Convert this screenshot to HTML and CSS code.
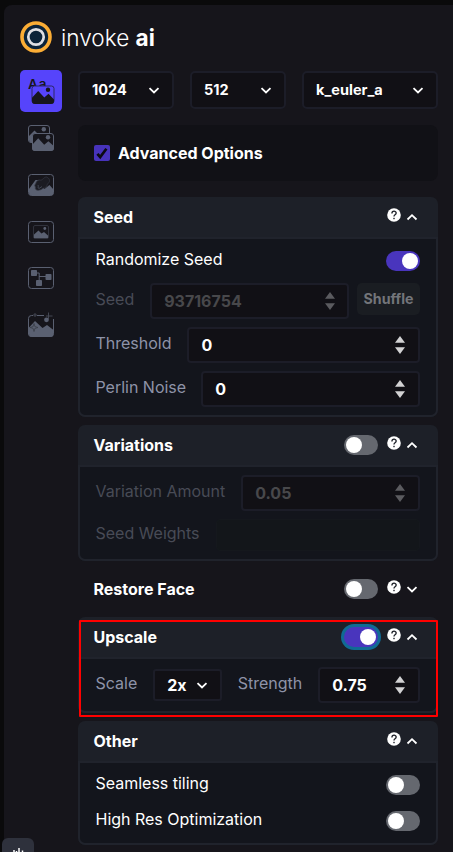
FILE: index.html
```html
<!DOCTYPE html>
<html lang="en">
<head>
<meta charset="utf-8">
<title>invoke ai</title>
<link rel="stylesheet" href="styles.css">
</head>
<body>
<svg width="0" height="0" class="defs">
  <defs>
    <symbol id="down" viewBox="0 0 12 12"><path d="M1.5 4.2 6 8.5l4.5-4.3" fill="none" stroke="currentColor" stroke-width="1.8"/></symbol>
    <symbol id="up" viewBox="0 0 12 12"><path d="M1.5 8.5 6 4.2l4.5 4.3" fill="none" stroke="currentColor" stroke-width="1.8"/></symbol>
    <symbol id="help" viewBox="0 0 14 14"><circle cx="7" cy="7" r="6.8" fill="#fff"/><path d="M4.9 5.5C4.9 2.4 9.2 2.6 9.2 5.1 9.2 6.8 7 6.8 7 8.4" fill="none" stroke="#1d2028" stroke-width="1.3"/><rect x="6.3" y="9.8" width="1.4" height="1.4" fill="#1d2028"/></symbol>
    <symbol id="spin" viewBox="0 0 10 18"><path d="M5 0 10 6.7H0zM0 11.2h10L5 18z" fill="currentColor"/></symbol>
  </defs>
</svg>
<div class="panel">
  <header class="brand">
    <svg width="32" height="32" viewBox="0 0 32 32"><circle cx="16" cy="16" r="14" fill="#0b2339" stroke="#fbad35" stroke-width="3.6"/><circle cx="16" cy="16" r="7.7" fill="none" stroke="#dedfe3" stroke-width="2.7"/></svg>
    <h1>invoke <b>ai</b></h1>
  </header>
  <div class="main">
    <nav class="rail">
      <button class="tab active"><svg width="42" height="42" viewBox="0 0 42 42"><text x="8" y="18.5" class="glyph">Aa</text><rect x="12" y="16" width="22" height="17.5" rx="2.5" fill="#5644fb" stroke="#2c2667"/><path d="M12 27.8l6.2-6.9 6.1 6.7 4.2-3.8 5.5 5.7V31q0 3-3 3H15q-3 0-3-3z" fill="#17161d"/><circle cx="28" cy="19.8" r="2.2" fill="#17161d"/></svg></button>
      <button class="tab"><svg width="42" height="42" viewBox="0 0 42 42"><rect x="8.5" y="8.5" width="21" height="17" rx="2.5" fill="none" stroke="#5a6071"/><path d="M9 19l5.5-5.5 4 4v8H12q-3 0-3-3z" fill="#5a6071"/><circle cx="23.8" cy="12.3" r="2.2" fill="#5a6071"/><rect x="12.5" y="16.5" width="21" height="17" rx="2.5" fill="#16151b" stroke="#5a6071"/><path d="M12 28l6.2-6.8 6 6.5 4.2-3.5 5.6 5V31q0 3-3 3H15q-3 0-3-3z" fill="#5a6071"/><circle cx="28" cy="20.2" r="2.2" fill="#5a6071"/></svg></button>
      <button class="tab"><svg width="42" height="42" viewBox="0 0 42 42"><rect x="8.5" y="10.5" width="25" height="21" rx="3" fill="none" stroke="#5a6071"/><path d="M9 25l6.5-9h4l5 9 5-4 4 4.5v3q0 3-3 3H12q-3 0-3-3z" fill="#5a6071"/><path d="M15.500 20c1-3 2-4 4-4 3 1 4-3 7-3 3 1 4 4 2 6-2 1-1 4-4 5-2 0-3 2-5 2-3 1-5-1-4-3-1-1-1-2 0-3z" fill="#1b1b22" stroke="#363a45" stroke-width=".7"/><path d="M18 21c1 1.500-1 3 1 3.500l3-2" fill="none" stroke="#474c5a" stroke-width=".8"/></svg></button>
      <button class="tab"><svg width="42" height="42" viewBox="0 0 42 42"><rect x="8.5" y="10.5" width="25" height="21" rx="3" fill="none" stroke="#5a6071"/><rect x="13.5" y="14.5" width="15" height="13" rx="1.5" fill="none" stroke="#30323c"/><path d="M14 23.5l4.5-4 3 3 2.5-1.5 4 3.5V27H14z" fill="#5a6071"/><circle cx="24.8" cy="17.5" r="1.4" fill="#5a6071"/></svg></button>
      <button class="tab"><svg width="42" height="42" viewBox="0 0 42 42"><rect x="8.5" y="9.5" width="25" height="21" rx="3" fill="none" stroke="#5a6071"/><path d="M14 15h5.2v9M19 18.5h8" fill="none" stroke="#5a6071"/><rect x="11" y="12" width="6" height="6" rx=".8" fill="#5a6071"/><rect x="25.5" y="16" width="6" height="6" rx=".8" fill="#5a6071"/><rect x="16" y="22" width="6" height="6" rx=".8" fill="#5a6071"/></svg></button>
      <button class="tab"><svg width="42" height="42" viewBox="0 0 42 42"><path d="M13 10.5h-1.5q-3 0-3 3V29q0 2.5 3 2.5h19q3 0 3-3V14M17 10.5h7" fill="none" stroke="#5a6071"/><path d="M9 22.5l6-6.5 7.5 7 4.5-3 6.5 5v4q0 3-3 3H12q-3 0-3-3z" fill="#5a6071"/><circle cx="26.5" cy="14.8" r="2.4" fill="#5a6071"/><path d="M14 18.500l.9 3.100 3.100.9-3.100.9-.9 3.100-.9-3.100-3.100-.9 3.100-.9z" fill="#5a6071" stroke="#3a3d48" stroke-width=".8"/><path d="M15 8v4M13 10h4M28.500 7.500v7M26 11h6.500" stroke="#484c59" stroke-width=".9"/></svg></button>
    </nav>
    <main class="options">
      <div class="selects">
        <div class="select">1024<svg width="12" height="12"><use href="#down"/></svg></div>
        <div class="select">512<svg width="12" height="12"><use href="#down"/></svg></div>
        <div class="select sampler">k_euler_a<svg width="12" height="12"><use href="#down"/></svg></div>
      </div>
      <label class="advanced"><span class="check"><svg width="16" height="16" viewBox="0 0 16 16"><path d="M3.4 8.8 6.2 12 12.4 3.8" fill="none" stroke="#0b0a12" stroke-width="2.7"/></svg></span>Advanced Options</label>

      <section class="card">
        <div class="head"><h2>Seed</h2><svg class="help" width="14" height="14"><use href="#help"/></svg><svg class="chev" width="12" height="12"><use href="#up"/></svg></div>
        <div class="body seed">
          <div class="row short bright"><span>Randomize Seed</span><i class="switch on"></i></div>
          <div class="row off"><span>Seed</span><div class="field">93716754<svg width="10" height="18"><use href="#spin"/></svg></div><button class="shuffle">Shuffle</button></div>
          <div class="row"><span>Threshold</span><div class="field">0<svg width="10" height="18"><use href="#spin"/></svg></div></div>
          <div class="row perlin"><span>Perlin Noise</span><div class="field">0<svg width="10" height="18"><use href="#spin"/></svg></div></div>
        </div>
      </section>

      <section class="card">
        <div class="head"><h2>Variations</h2><i class="switch"></i><svg class="help" width="14" height="14"><use href="#help"/></svg><svg class="chev" width="12" height="12"><use href="#up"/></svg></div>
        <div class="body">
          <div class="row off"><span>Variation Amount</span><div class="field">0.05<svg width="10" height="18"><use href="#spin"/></svg></div></div>
          <div class="row off weights"><span>Seed Weights</span><div class="blank"></div></div>
        </div>
      </section>

      <section class="card closed">
        <div class="head"><h2>Restore Face</h2><i class="switch"></i><svg class="help" width="14" height="14"><use href="#help"/></svg><svg class="chev" width="12" height="12"><use href="#down"/></svg></div>
      </section>

      <section class="card upscale">
        <div class="head"><h2>Upscale</h2><i class="switch on focus"></i><svg class="help" width="14" height="14"><use href="#help"/></svg><svg class="chev" width="12" height="12"><use href="#up"/></svg></div>
        <div class="body">
          <div class="row"><span>Scale</span><div class="select scale">2x<svg width="12" height="12"><use href="#down"/></svg></div><span>Strength</span><div class="field">0.75<svg width="10" height="18"><use href="#spin"/></svg></div></div>
        </div>
      </section>

      <section class="card">
        <div class="head"><h2>Other</h2><svg class="help" width="14" height="14"><use href="#help"/></svg><svg class="chev" width="12" height="12"><use href="#up"/></svg></div>
        <div class="body other">
          <div class="row short bright"><span>Seamless tiling</span><i class="switch"></i></div>
          <div class="row short bright"><span>High Res Optimization</span><i class="switch"></i></div>
        </div>
      </section>
    </main>
  </div>
</div>
<button class="console"><svg width="32" height="32" viewBox="0 0 32 32"><path d="M12 12v8M17 10v10M20.5 12.5v7M14.5 13v8" stroke="#fff" stroke-width="1.5"/></svg></button>
</body>
</html>
```

FILE: styles.css
```css
* { box-sizing: border-box; }
body {
  margin: 0;
  height: 852px;
  overflow: hidden;
  padding: 5px 0 0 4px;
  background: #0a0a0b;
  color: #fff;
  font: 16px/24px Inter, "Liberation Sans", sans-serif;
}
svg { display: block; flex: none; }
.defs { position: absolute; }
button { border: 0; padding: 0; font: inherit; }
.panel {
  height: 860px;
  padding: 16px 15px 0 16px;
  border-top-left-radius: 8px;
  background: #16151b;
}
.brand { display: flex; align-items: center; gap: 9px; height: 32px; }
h1 { margin: 0; font-size: 22.6px; font-weight: 300; line-height: 32px; padding-top: 2px; }
h1 b { font-weight: 700; }
.main { display: flex; gap: 16px; padding-top: 17px; }
.rail { display: flex; flex-direction: column; gap: 5px; width: 42px; }
.tab { width: 42px; height: 42px; border-radius: 5px; background: transparent; }
.active { background: #5644fb; }
.glyph { font: 600 13.5px Inter, sans-serif; letter-spacing: 1px; fill: #17161d; }
.options { width: 360px; padding-top: 1px; display: flex; flex-direction: column; gap: 8px; }
.selects { display: flex; gap: 16px; margin-bottom: 8px; }
.select {
  display: flex;
  align-items: center;
  justify-content: space-between;
  width: 96px;
  height: 38px;
  padding: 0 12px;
  border: 2px solid #1c1d28;
  border-radius: 5px;
  background: #111015;
  color: #fff;
  font-size: 14.5px;
  font-weight: 700;
}
.sampler { width: 136px; }
.advanced {
  display: flex;
  align-items: center;
  gap: 8px;
  height: 56px;
  padding: 0 16px;
  margin-bottom: 8px;
  border-radius: 8px;
  background: #111116;
  font-size: 16px;
  font-weight: 700;
}
.check { width: 16px; height: 16px; border-radius: 2px; background: #4733bb; }
.card { border-radius: 7px; background: #1d2028; overflow: hidden; }
.closed { background: none; }
.head { display: flex; align-items: center; height: 40px; padding: 0 20px 0 15.5px; }
h2 { flex: 1; margin: 0; font-size: 16px; line-height: 24px; font-weight: 700; }
.help { margin: -4px 5px 0 9px; }
.body {
  border: 2px solid #20232c;
  border-radius: 0 0 7px 7px;
  padding: 8px 16px;
  background: #13151c;
  display: flex;
  flex-direction: column;
  gap: 8px;
}
.row { display: flex; height: 36px; gap: 16px; color: #8e93a8; }
.row > span {
  line-height: 32px;
  white-space: nowrap;
  margin-left: -0.5px;
  letter-spacing: -0.01px;
}
.row > .switch { margin-left: auto; }
.short { height: 20px; }
.short > span { line-height: 17px; }
.bright { color: #fff; }
.off { color: #484b56; }
.seed { padding-top: 12px; }
.seed .short { margin-bottom: 4px; }
.perlin { gap: 15px; }
.other { padding: 12px 16px; gap: 16px; }
.field {
  flex: 1;
  display: flex;
  align-items: center;
  justify-content: space-between;
  padding: 0 13px 0 12px;
  border: 2px solid #1c1d28;
  border-radius: 4px;
  background: #111015;
  color: #fff;
  font-weight: 700;
}
.field svg { color: #d2d2d3; }
.off .field { color: #48484b; }
.off .field svg { color: #5b5b5f; }
.seed .off .field svg { margin-right: -1px; }
.shuffle {
  width: 63px;
  height: 32px;
  margin-left: -8px;
  border-radius: 5px;
  background: #1a1d22;
  color: #73757a;
  font-size: 14.2px;
  font-weight: 700;
}
.weights { height: 32px; }
.weights > span { line-height: 29px; }
.blank { flex: 1; border: 1px solid #15181d; border-radius: 4px; background: #13161a; }
.scale { width: 69px; height: 32px; margin-top: 2px; font-size: 16px; border-radius: 3px; }
.switch {
  width: 34px;
  height: 20px;
  padding: 2px;
  border-radius: 10px;
  background: #65686f;
  display: flex;
}
.switch::before { content: ""; width: 16px; height: 16px; border-radius: 50%; background: #fff; }
.on { background: #4935bd; justify-content: flex-end; }
.focus { box-shadow: 0 0 0 3px #106b94; }
.upscale { position: relative; overflow: visible; }
.upscale::after {
  content: "";
  position: absolute;
  inset: 3px 0 -4px 1px;
  border: 2px solid #f00;
  border-radius: 1px;
}
.console {
  position: absolute;
  left: 2px;
  top: 838px;
  width: 32px;
  height: 14px;
  overflow: hidden;
  border-radius: 6px 6px 0 0;
  background: #2e313c;
}
```
